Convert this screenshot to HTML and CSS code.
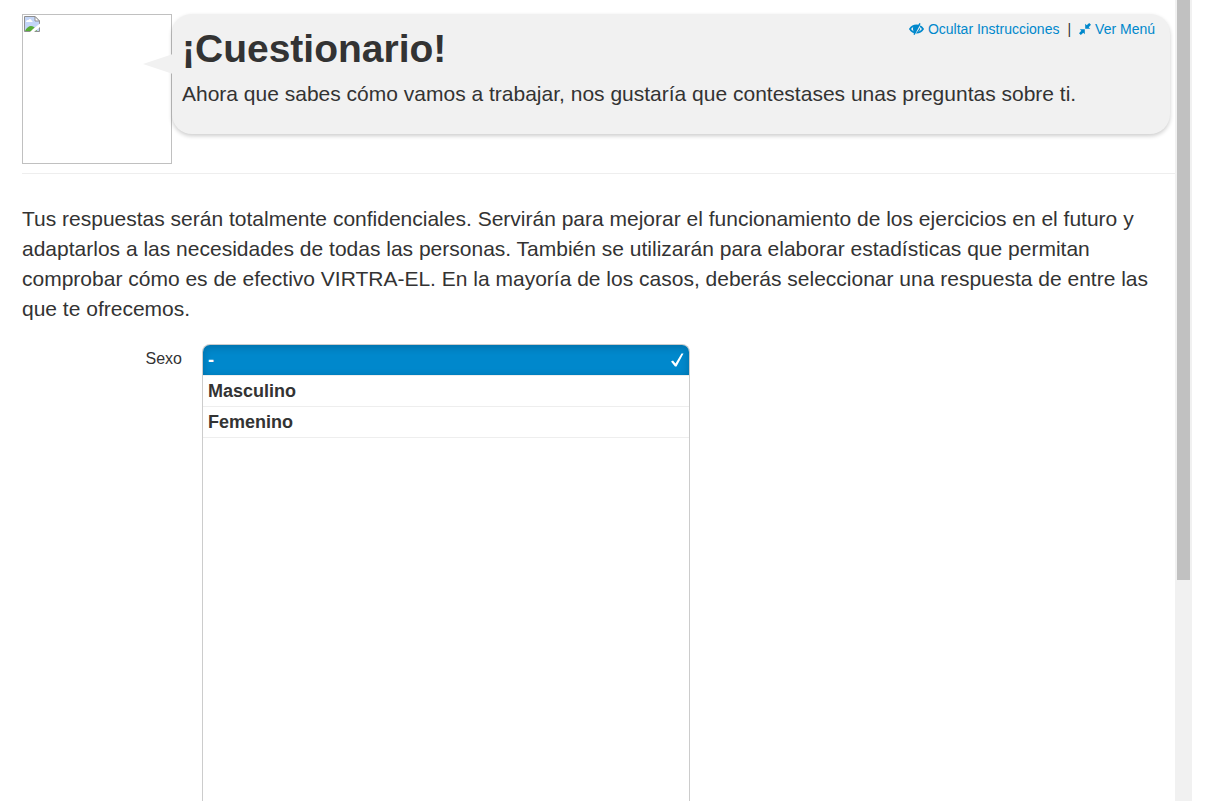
FILE: index.html
```html
<!DOCTYPE html>
<html lang="es">
<head>
<meta charset="utf-8">
<meta name="viewport" content="width=device-width, initial-scale=1">
<title>Cuestionario</title>
<link rel="stylesheet" href="styles.css">
</head>
<body>
<div class="viewport">
  <main class="page">
    <header class="intro">
      <div class="avatar" role="img" aria-label="Imagen no disponible">
        <svg class="broken" viewBox="0 0 16 16" aria-hidden="true">
          <path d="M.5 15.500V.5H11l4.500 4.500v10.500z" fill="#c3d5f7"/>
          <path d="M2 6c0-2 2-2 2.500-2 1-2 3-1 3 .5C9 5 9 6 8 6z" fill="#fff"/>
          <path d="M1 15c1-3 4-5 6-5s4 1 6 5z" fill="#57ad37"/>
          <path d="M.5 15.500V.5H11l4.500 4.500v10.500z" fill="none" stroke="#8f8f8f"/>
          <path d="M11 .5V5h4.500z" fill="#fff" stroke="#8f8f8f"/>
          <path d="M6 16l3-3 7-5.500V11l-6 5z" fill="#fff"/>
        </svg>
      </div>
      <section class="bubble">
        <svg class="pointer" viewBox="0 0 30 20" aria-hidden="true"><path d="M0 10L30 0v20z" fill="#f1f1f1"/></svg>
        <nav class="tools" aria-label="Opciones">
          <a href="#instrucciones"><svg class="eye" viewBox="0 0 15 12" aria-hidden="true"><path d="M1 6C4 1.200 11 1.200 14 6 11 10.800 4 10.800 1 6z" fill="none" stroke="currentColor" stroke-width="1.800"/><path d="M5 2h5.500L6 10C3.500 8 3.500 4.500 5 2zM11 4.500c.5 2.500-.5 4-3 4.500z" fill="currentColor"/><path d="M12 .5L6 11.500" stroke="#f1f1f1" stroke-width="1"/><path d="M11 .3L5 11.700" stroke="currentColor" stroke-width="1.400"/></svg>Ocultar Instrucciones</a>
          <span class="divider">|</span>
          <a href="#menu"><svg class="compress" viewBox="0 0 12 12" aria-hidden="true"><path d="M6.200 5.800V.8L7.700 2.300 10.200 0 12 1.800 9.700 4.300 11.200 5.800zM5.800 6.200V11.200L4.300 9.700 1.800 12 0 10.200 2.300 7.700.8 6.200z" fill="currentColor"/></svg>Ver Menú</a>
        </nav>
        <h1>¡Cuestionario!</h1>
        <p>Ahora que sabes cómo vamos a trabajar, nos gustaría que contestases unas preguntas sobre ti.</p>
      </section>
    </header>
    <p class="notice">Tus respuestas serán totalmente confidenciales. Servirán para mejorar el funcionamiento de los ejercicios en el futuro y adaptarlos a las necesidades de todas las personas. También se utilizarán para elaborar estadísticas que permitan comprobar cómo es de efectivo VIRTRA-EL. En la mayoría de los casos, deberás seleccionar una respuesta de entre las que te ofrecemos.</p>
    <form class="question">
      <span class="question-label" id="sexo">Sexo</span>
      <div class="choices" role="radiogroup" aria-labelledby="sexo">
        <label class="choice"><input type="radio" name="sexo" value="" checked><span>-</span><svg class="tick" viewBox="0 0 13 14" aria-hidden="true"><path d="M0 8.500l2-1 2.500 3L10.500.5h2L5.500 13.500H4z" fill="currentColor"/></svg></label>
        <label class="choice"><input type="radio" name="sexo" value="m"><span>Masculino</span><svg class="tick" viewBox="0 0 13 14" aria-hidden="true"><path d="M0 8.500l2-1 2.500 3L10.500.5h2L5.500 13.500H4z" fill="currentColor"/></svg></label>
        <label class="choice"><input type="radio" name="sexo" value="f"><span>Femenino</span><svg class="tick" viewBox="0 0 13 14" aria-hidden="true"><path d="M0 8.500l2-1 2.500 3L10.500.5h2L5.500 13.500H4z" fill="currentColor"/></svg></label>
      </div>
    </form>
  </main>
  <div class="scrollbar" aria-hidden="true"><div class="thumb"></div></div>
</div>
</body>
</html>
```
FILE: styles.css
```css
* {
  box-sizing: border-box;
}

body {
  margin: 0;
  background: #fff;
  color: #333;
  font-family: "Liberation Sans", Arial, sans-serif;
  font-size: 21px;
  line-height: 30px;
}

h1,
p {
  margin: 0;
}

.viewport {
  display: flex;
  min-height: 100vh;
  padding: 0 34px 0 22px;
}

.page {
  flex: 1;
  display: flex;
  flex-direction: column;
  min-width: 0;
  padding-top: 14px;
}

.intro {
  display: flex;
  align-items: flex-start;
  padding-bottom: 9px;
  border-bottom: 1px solid #eee;
}

.avatar {
  flex: none;
  width: 150px;
  height: 150px;
  padding: 1px;
  border: 1px solid #c0c0c0;
}

.broken {
  display: block;
  width: 16px;
  height: 16px;
}

.bubble {
  position: relative;
  flex: 1;
  min-height: 120px;
  margin-right: 5px;
  padding: 10px;
  border-radius: 20px;
  background: #f1f1f1;
  box-shadow: 0 2px 4px rgba(0, 0, 0, 0.2);
}

.pointer {
  position: absolute;
  top: 40px;
  left: -29px;
  width: 30px;
  height: 20px;
}

.tools {
  position: absolute;
  top: 5px;
  right: 15px;
  display: flex;
  gap: 8px;
  font-size: 14px;
  line-height: 20px;
}

.tools a {
  display: flex;
  align-items: center;
  gap: 4px;
  color: #0088cc;
  text-decoration: none;
}

.eye {
  width: 15px;
  height: 12px;
}

.compress {
  width: 12px;
  height: 12px;
}

h1 {
  font-size: 39px;
  line-height: 50px;
}

.bubble p {
  padding-top: 5px;
}

.notice {
  padding: 30px 0 20px;
}

.question {
  flex: 1;
  display: flex;
  gap: 20px;
}

.question-label {
  width: 160px;
  font-size: 16px;
  text-align: right;
}

.choices {
  width: 488px;
  border: 1px solid #ccc;
  border-bottom: 0;
  border-radius: 8px 8px 0 0;
  overflow: hidden;
}

.choice {
  display: flex;
  align-items: center;
  justify-content: space-between;
  height: 31px;
  padding: 0 5px;
  border-bottom: 1px solid #eee;
  font-size: 18px;
  font-weight: bold;
}

.choice input {
  position: absolute;
  opacity: 0;
}

.choice:has(input:checked) {
  background: #0088cc;
  background-clip: padding-box;
  box-shadow: inset 0 2px 8px rgba(0, 0, 0, 0.2);
  color: #fff;
}

.tick {
  display: none;
  width: 13px;
  height: 14px;
}

.choice:has(input:checked) .tick {
  display: block;
}

.scrollbar {
  width: 17px;
  padding: 0 2px;
  background: #f1f1f1;
}

.thumb {
  height: 580px;
  background: #c1c1c1;
}
```
